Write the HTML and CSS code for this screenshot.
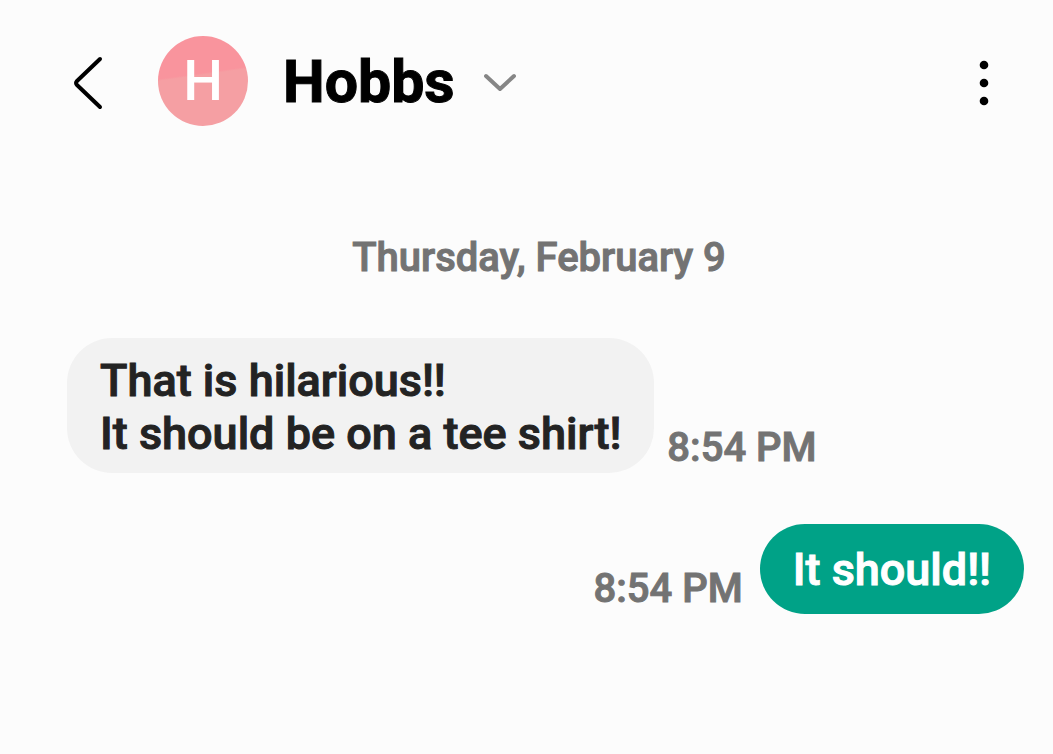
FILE: index.html
```html
<!DOCTYPE html>
<html lang="en">
<head>
    <meta charset="UTF-8">
    <meta name="viewport" content="width=device-width, initial-scale=1.0">
    <title>Hobbs</title>
    <link rel="stylesheet" href="styles.css">
</head>
<body>
    <header>
        <button type="button" class="icon-button back" aria-label="Back">
            <svg width="32" height="56" viewBox="0 0 32 56"><path d="M28 4 5 26Q3 28 5 30L28 52"/></svg>
        </button>
        <div class="avatar">H</div>
        <button type="button" class="contact">
            <h1>Hobbs</h1>
            <svg width="34" height="22" viewBox="0 0 34 22"><path d="M3 5 17 18 31 5"/></svg>
        </button>
        <button type="button" class="icon-button more" aria-label="More options">
            <svg width="12" height="48" viewBox="0 0 12 48">
                <circle cx="6" cy="6" r="4.3"/>
                <circle cx="6" cy="24" r="4.3"/>
                <circle cx="6" cy="42" r="4.3"/>
            </svg>
        </button>
    </header>
    <main>
        <p class="date">Thursday, February 9</p>

        <div class="message received">
            <p class="bubble">That is hilarious!!<br>It should be on a tee shirt!</p>
            <time>8:54 PM</time>
        </div>

        <div class="message sent">
            <time>8:54 PM</time>
            <p class="bubble">It should!!</p>
        </div>
    </main>
</body>
</html>
```
FILE: styles.css
```css
* {
    box-sizing: border-box;
}

body {
    font-family: Roboto, sans-serif;
    margin: 0;
    background-color: #fcfcfc;
    color: #232323;
    -webkit-text-stroke: 1px currentColor;
}

header {
    display: flex;
    align-items: center;
    padding: 36px 63px 0 72px;
}

h1, p {
    margin: 0;
}

button {
    display: flex;
    align-items: center;
    padding: 0;
    border: none;
    background: none;
    font-family: inherit;
    color: #000;
    cursor: pointer;
}

svg {
    display: block;
    fill: none;
    stroke: currentColor;
    stroke-width: 4;
    stroke-linecap: round;
    stroke-linejoin: round;
}

.icon-button {
    padding-top: 3px;
}

.avatar {
    width: 90px;
    height: 90px;
    margin-left: 54px;
    border-radius: 50%;
    background: linear-gradient(172deg, #f9949d 42%, #f59fa3 44%);
    color: #fff;
    font-size: 56px;
    font-weight: 500;
    line-height: 90px;
    text-align: center;
    -webkit-text-stroke: 0;
}

.contact {
    gap: 28px;
    margin-left: 35px;
    padding-top: 2px;
}

.contact h1 {
    font-size: 59px;
    font-weight: bold;
    line-height: 70px;
}

.contact svg {
    color: #868686;
}

.more {
    margin-left: auto;
}

.more svg {
    fill: currentColor;
    stroke: none;
}

main {
    padding: 103px 29px 60px 54px;
}

.date {
    color: #737373;
    font-size: 40px;
    font-weight: 500;
    line-height: 58px;
    text-align: center;
}

.message {
    display: flex;
    align-items: flex-end;
    gap: 13px;
    margin-top: 51px;
}

.received {
    padding-left: 13px;
}

.sent {
    justify-content: flex-end;
    gap: 17px;
}

.bubble {
    padding: 16px 33px 13px;
    border-radius: 45px;
    background-color: #f2f2f2;
    font-size: 45px;
    font-weight: 500;
    line-height: 53px;
}

.sent .bubble {
    padding: 19px 33px 18px;
    background-color: #00a287;
    color: #fff;
}

time {
    color: #737373;
    font-size: 40px;
    font-weight: 500;
    line-height: 50px;
}
```
